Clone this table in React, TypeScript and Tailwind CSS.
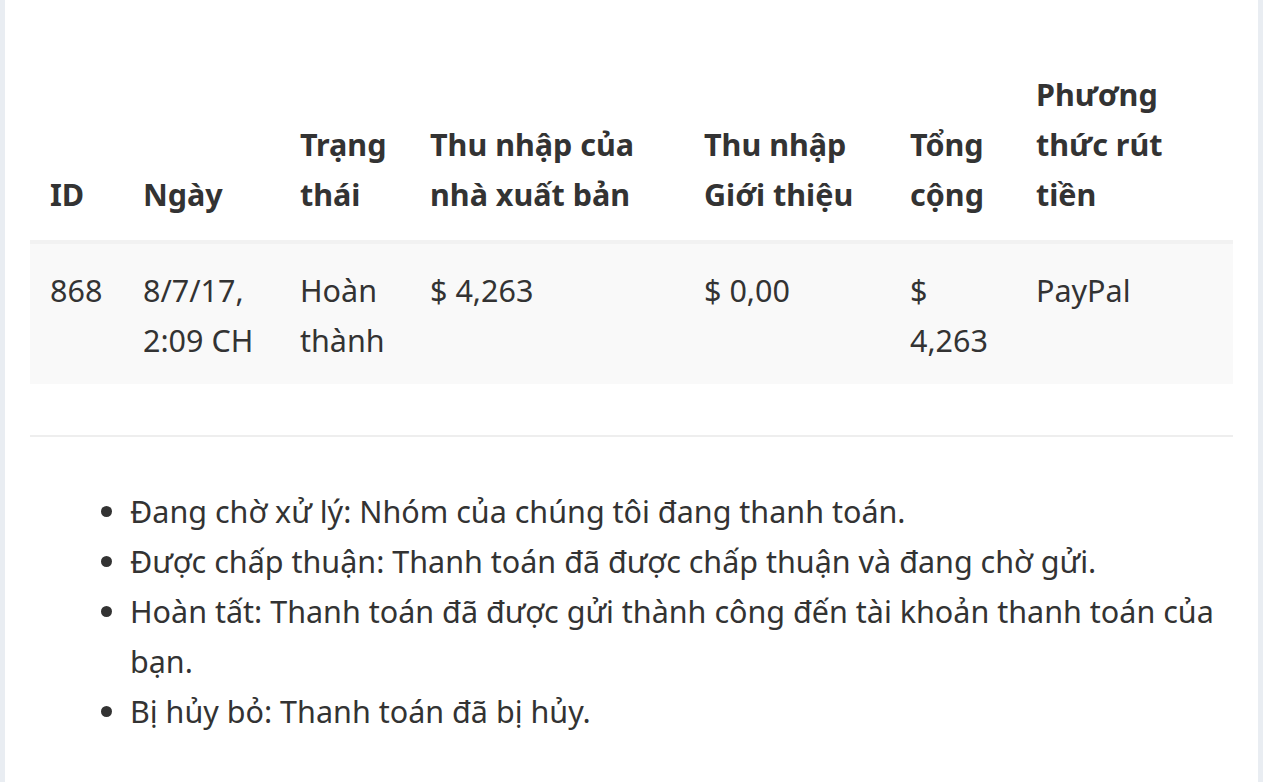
const COLS = [
  { label: ["ID"], w: "w-[93px]" },
  { label: ["Ngày"], w: "w-[157px]" },
  { label: ["Trạng", "thái"], w: "w-[130px]" },
  { label: ["Thu nhập của", "nhà xuất bản"], w: "w-[274px]" },
  { label: ["Thu nhập", "Giới thiệu"], w: "w-[206px]" },
  { label: ["Tổng", "cộng"], w: "w-[126px]" },
  { label: ["Phương", "thức rút", "tiền"], w: "w-[217px]" },
];

const ROW = [["868"], ["8/7/17,", "2:09 CH"], ["Hoàn", "thành"], ["$ 4,263"], ["$ 0,00"], ["$", "4,263"], ["PayPal"]];

const STATUSES = [
  "Đang chờ xử lý: Nhóm của chúng tôi đang thanh toán.",
  "Được chấp thuận: Thanh toán đã được chấp thuận và đang chờ gửi.",
  "Hoàn tất: Thanh toán đã được gửi thành công đến tài khoản thanh toán của bạn.",
  "Bị hủy bỏ: Thanh toán đã bị hủy.",
];

export default function App() {
  return (
    <div className="min-h-screen bg-[#e9edf2] px-[5px] font-['Noto_Sans',sans-serif] text-[#333]">
      <div className="min-h-screen bg-white px-[25px] pt-[49px] text-[30.5px] leading-[50px]">
        <table className="w-full table-fixed border-collapse">
          <thead>
            <tr className="border-b-4 border-[#f2f2f2]">
              {COLS.map((c) => (
                <th key={c.label.join(" ")} className={`${c.w} px-5 pt-5 pb-[21px] text-left align-bottom font-bold`}>
                  {c.label.map((l) => (
                    <div key={l} className="whitespace-nowrap">{l}</div>
                  ))}
                </th>
              ))}
            </tr>
          </thead>
          <tbody>
            <tr className="bg-[#f9f9f9]">
              {ROW.map((cell, i) => (
                <td key={i} className="px-5 pt-[21px] pb-[19px] align-top">
                  {cell.map((l) => (
                    <div key={l} className="whitespace-nowrap">{l}</div>
                  ))}
                </td>
              ))}
            </tr>
          </tbody>
        </table>
        <hr className="mt-[51px] border-t-2 border-[#eeeeee]" />
        <ul className="mt-[49px] list-disc pl-[100px] pr-[10px] marker:text-[#333]">
          {STATUSES.map((s) => (
            <li key={s}>{s}</li>
          ))}
        </ul>
      </div>
    </div>
  );
}
